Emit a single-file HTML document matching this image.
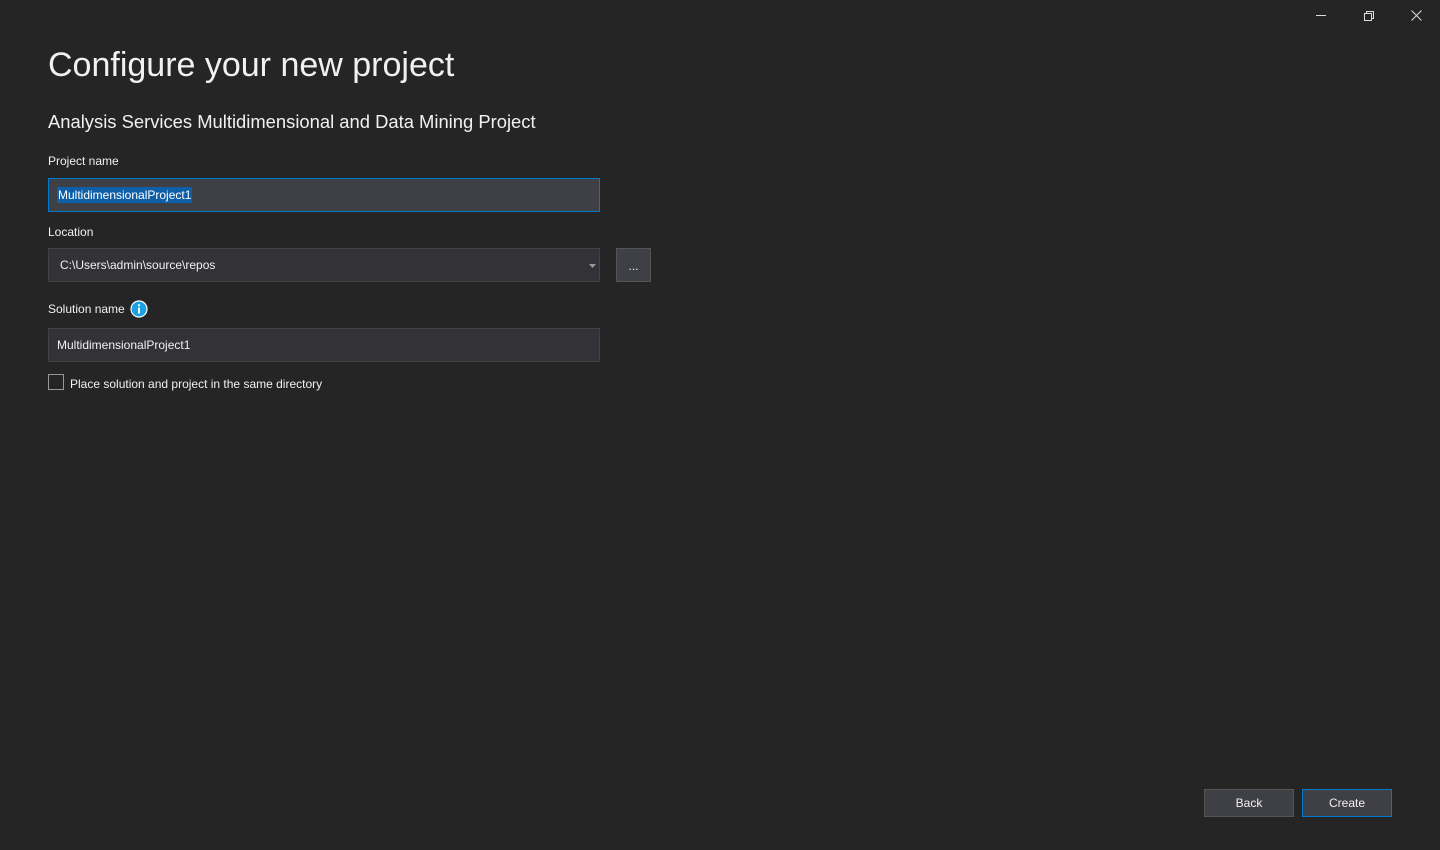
<!DOCTYPE html>
<html><head><meta charset="utf-8"><style>
body{margin:0;width:1440px;height:850px;background:#252526;font-family:"Liberation Sans",sans-serif;color:#f1f1f1;position:relative;overflow:hidden}
.a{position:absolute}
.lbl{font-size:12px;color:#f1f1f1}
.box{position:absolute;left:48px;width:550px;height:32px;background:#333337;border:1px solid #434346;font-size:12px;line-height:32px;box-sizing:content-box}
.btn{position:absolute;height:26px;background:#3f3f46;border:1px solid #555;font-size:12px;text-align:center;line-height:26px;box-sizing:border-box}
</style></head><body>
<div class="a" style="left:48px;top:46px;font-size:34px;color:#f1f1f1">Configure your new project</div>
<div class="a" style="left:48px;top:111px;font-size:18.4px">Analysis Services Multidimensional and Data Mining Project</div>
<div class="a lbl" style="left:48px;top:154px">Project name</div>
<div class="box" style="top:178px;border-color:#007acc;background:#3f3f46;height:32px"><span style="margin-left:8px;background:#0e5fa8;padding:1px 1px;color:#fff">MultidimensionalProject1</span></div>
<div class="a lbl" style="left:48px;top:225px">Location</div>
<div class="box" style="top:248px"><span style="margin-left:11px">C:\Users\admin\source\repos</span>
<svg class="a" style="left:540px;top:15px" width="7" height="4"><path d="M0 0h7L3.5 4z" fill="#999"/></svg></div>
<div class="btn" style="left:616px;top:248px;width:35px;height:34px;line-height:34px;border-color:#555;background:#3f3f46">...</div>
<div class="a lbl" style="left:48px;top:302px">Solution name</div>
<svg class="a" style="left:130px;top:300px" width="18" height="18"><circle cx="9" cy="9" r="8" fill="#1ba1e2" stroke="#fff" stroke-width="1.2"/><rect x="8" y="7.5" width="2" height="6" fill="#fff"/><circle cx="9" cy="5.2" r="1.1" fill="#fff"/></svg>
<div class="box" style="top:328px"><span style="margin-left:8px">MultidimensionalProject1</span></div>
<div class="a" style="left:48px;top:374px;width:16px;height:16px;border:1px solid #999;box-sizing:border-box"></div>
<div class="a lbl" style="left:70px;top:377px">Place solution and project in the same directory</div>
<div class="btn" style="left:1204px;top:789px;width:90px;height:28px;line-height:26px">Back</div>
<div class="btn" style="left:1302px;top:789px;width:90px;height:28px;line-height:26px;border-color:#007acc">Create</div>
<svg class="a" style="left:1316px;top:10px" width="12" height="12"><path d="M0 5.5h10" stroke="#ddd"/></svg>
<svg class="a" style="left:1363px;top:10px" width="12" height="12"><path d="M1.5 3.5h7v7h-7z M3.5 3.5V1.5h7v7h-2" stroke="#ddd" fill="none"/></svg>
<svg class="a" style="left:1411px;top:10px" width="12" height="12"><path d="M0.5 0.5l10 10M10.5 0.5l-10 10" stroke="#ddd"/></svg>
</body></html>
